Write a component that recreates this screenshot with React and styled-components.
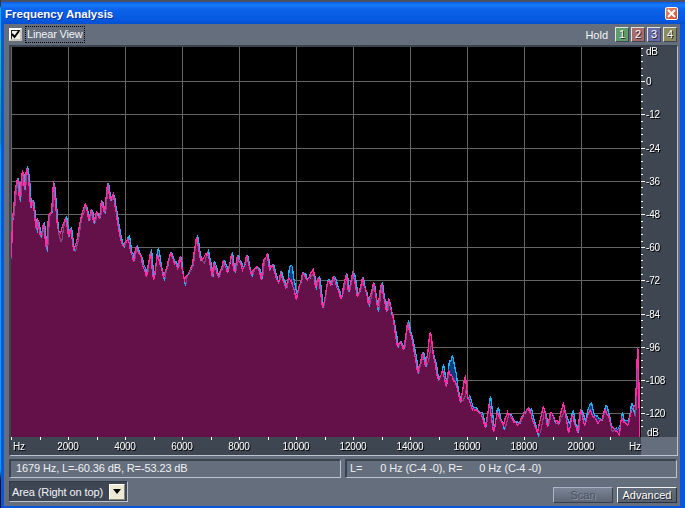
import React from "react";
import styled, { createGlobalStyle } from "styled-components";

const Global = createGlobalStyle`
  html, body { margin: 0; padding: 0; background: #0a4fd0; }
  body { width: 685px; height: 508px; overflow: hidden; }
  #root { width: 685px; height: 508px; }
`;

const UI = `"Liberation Sans", Arial, sans-serif`;

const Desktop = styled.div`
  width: 685px;
  height: 508px;
  display: flex;
  background: #0d0d0d;
`;
const Sliver = styled.div`
  width: 1px;
  flex: none;
  background: linear-gradient(to bottom, #30343c 0, #30343c 6px, #10a8e8 8px, #10a8e8 38px, #18c890 42px, #109880 140px, #0ea0e0 150px, #0ea0e0 470px, #101018 480px, #101018 508px);
`;
const Window = styled.div`
  flex: 1;
  display: flex;
  flex-direction: column;
  border-top: 2px solid #4a5060;
  background: #0a55dc;
  padding: 0 5px 2px 3px;
  min-width: 0;
`;
const TitleBar = styled.div`
  height: 22px;
  margin: 0 -5px 0 -3px;
  padding: 1px 7px 0 4px;
  box-sizing: border-box;
  display: flex;
  align-items: center;
  justify-content: space-between;
  background: linear-gradient(to bottom, #0a5fe8 0, #1878f8 3px, #0a62ea 8px, #0658e0 18px, #0450d0 22px);
`;
const Title = styled.div`
  font: bold 11.5px ${UI};
  color: #fff;
  text-shadow: 1px 1px 0 #0a2f90;
  white-space: nowrap;
`;
const Close = styled.div`
  width: 13px;
  height: 13px;
  box-sizing: border-box;
  border: 1px solid #fff;
  border-radius: 2px;
  background: linear-gradient(135deg, #ee8a68, #d84a28);
  display: flex;
  align-items: center;
  justify-content: center;
  svg { display: block; }
`;
const Content = styled.div`
  flex: 1;
  background: #646e7c;
  padding: 0 2px 0 5px;
  display: flex;
  flex-direction: column;
  min-height: 0;
`;
const Toolbar = styled.div`
  height: 21px;
  display: flex;
  align-items: center;
  justify-content: space-between;
  padding-right: 1px;
`;
const CheckWrap = styled.div`
  display: flex;
  align-items: center;
  gap: 4px;
`;
const CheckBox = styled.div`
  width: 13px;
  height: 13px;
  box-sizing: border-box;
  background: #f4f2e8;
  border: 2px solid;
  border-color: #fff #c8c4b4 #c8c4b4 #fff;
  box-shadow: inset 1px 1px 0 #222;
  display: flex;
  align-items: center;
  justify-content: center;
`;
const CheckLabel = styled.div`
  font: 11px ${UI};
  color: #f2f4f8;
  outline: 1px dotted #000;
  padding: 1px;
  height: 13px;
  line-height: 13px;
  letter-spacing: -0.15px;
  white-space: nowrap;
`;
const HoldGroup = styled.div`
  display: flex;
  align-items: center;
  gap: 2px;
`;
const HoldLabel = styled.div`
  font: 11px ${UI};
  color: #f2f4f8;
  margin-right: 5px;
`;
const HoldButton = styled.div`
  width: 14px;
  height: 15px;
  box-sizing: border-box;
  border: 1px solid;
  border-color: #dfe6d8 #3e4450 #3e4450 #dfe6d8;
  background: ${(p) => p.$bg};
  color: #fff;
  font: 11px/13px ${UI};
  text-align: center;
  text-shadow: 1px 1px 0 #222;
`;
const ChartFrame = styled.div`
  width: 669px;
  height: 411px;
  box-sizing: border-box;
  border-style: solid;
  border-width: 2px 1px 1px 2px;
  border-color: #3a424e #bcc4d0 #bcc4d0 #3a424e;
  svg { display: block; }
`;
const RulerText = styled.text`
  font: 10px ${UI};
  letter-spacing: -0.2px;
  fill: #fff;
`;
const RulerGroup = styled.g`
  filter: drop-shadow(1px 1px 0 #000);
`;
const StatusRow = styled.div`
  display: flex;
  gap: 4px;
  margin-top: 3px;
`;
const StatusPanel = styled.div`
  width: 332px;
  height: 19px;
  box-sizing: border-box;
  border-style: solid;
  border-width: 2px 1px 1px 2px;
  border-color: #3a424e #bcc4d0 #bcc4d0 #3a424e;
  padding-left: ${(p) => p.$pad}px;
  font: 11px/15px ${UI};
  letter-spacing: -0.12px;
  color: #eef0f4;
  white-space: pre;
`;
const Gap = styled.span`
  display: inline-block;
  width: ${(p) => p.$w}px;
`;
const BottomRow = styled.div`
  flex: 1;
  display: flex;
  align-items: flex-start;
  justify-content: space-between;
  margin-top: 3px;
`;
const Combo = styled.div`
  width: 119px;
  height: 21px;
  box-sizing: border-box;
  border-style: solid;
  border-width: 1px;
  border-color: #333a46 #bcc4d0 #bcc4d0 #333a46;
  background: #3e4654;
  display: flex;
  align-items: center;
  justify-content: space-between;
  padding: 0 1px 0 2px;
  font: 11px ${UI};
  letter-spacing: -0.1px;
  color: #f2f4f8;
  white-space: nowrap;
`;
const ComboButton = styled.div`
  width: 16px;
  height: 16px;
  background: #ece8d6;
  border: 1px solid;
  border-color: #fff #8a8878 #8a8878 #fff;
  box-sizing: border-box;
  display: flex;
  align-items: center;
  justify-content: center;
  margin-right: 1px;
`;
const Actions = styled.div`
  display: flex;
  gap: 4px;
  align-self: flex-end;
  margin-bottom: 3px;
  margin-right: 1px;
`;
const ActionButton = styled.div`
  width: 60px;
  height: 16px;
  box-sizing: border-box;
  border: 1px solid;
  border-color: ${(p) => (p.$off ? "#aab4c8 #39404c #39404c #aab4c8" : "#f0f2f6 #2a303a #2a303a #f0f2f6")};
  background: ${(p) => (p.$off ? "linear-gradient(#7a8494,#5c6674)" : "linear-gradient(#626c7a,#58626e)")};
  color: ${(p) => (p.$off ? "#4a525e" : "#fff")};
  font: 11px/14px ${UI};
  text-align: center;
  text-shadow: ${(p) => (p.$off ? "1px 1px 0 #8a94a4" : "1px 1px 0 #1c2028")};
`;

// pink (right) channel, traced peaks and valleys, page coordinates
const RP = [[11,257],[12,218],[15,188],[17,178],[19,200],[22,170],[24,190],[26,168],[28,177],[30,207],[32,200],[36,230],[37,218],[40,237],[43,223],[46,250],[48,215],[51,213],[53,181],[57,228],[60,233],[65,218],[68,237],[70,228],[73,250],[77,238],[80,220],[85,203],[88,220],[91,210],[93,222],[96,211],[99,218],[101,200],[104,213],[107,183],[110,200],[113,193],[117,223],[122,245],[128,240],[133,262],[135,248],[140,255],[146,277],[150,252],[153,280],[157,254],[163,278],[170,253],[177,268],[180,257],[184,280],[192,265],[196,237],[200,260],[207,252],[212,277],[213,262],[218,277],[223,260],[227,273],[231,254],[234,272],[237,255],[242,270],[246,255],[251,275],[257,267],[261,280],[263,260],[267,254],[269,269],[272,265],[278,283],[280,273],[285,288],[288,278],[291,280],[296,300],[302,273],[307,280],[313,268],[315,288],[318,277],[322,308],[327,282],[330,285],[333,277],[341,298],[346,273],[348,292],[352,273],[357,297],[362,277],[368,305],[373,282],[377,308],[381,283],[386,312],[388,298],[393,320],[397,347],[400,342],[403,350],[407,323],[411,337],[417,373],[422,352],[425,367],[430,332],[433,357],[438,380],[442,370],[446,387],[448,370],[455,382],[460,403],[465,375],[467,397],[472,410],[480,413],[485,427],[489,403],[493,432],[497,412],[503,425],[507,412],[517,425],[523,413],[528,408],[537,433],[543,407],[547,427],[550,413],[558,425],[563,402],[568,433],[572,415],[577,433],[580,410],[584,425],[590,410],[593,417],[598,423],[605,410],[612,427],[619,435],[621,417],[627,425],[633,407],[635,405],[636,380],[637,348],[638,350],[639,437]];

// local differences of the left channel from the right: [x, dy, half width]
const BUMPS = [[27,-3,2],[37,2,2],[60,8,3],[66,-2,2],[70,-3,2],[128,-4,3],[150,-5,3],[157,-9,3],[163,6,3],[170,-2,3],[184,7,3],[196,-3,2],[204,5,3],[231,-3,2],[250,3,3],[291,-17,3],[296,-5,2],[313,6,3],[327,-4,3],[346,3,2],[356,-2,3],[368,5,3],[377,6,3],[392,7,3],[407,-2,3],[430,14,3],[433,4,2],[443,-4,3],[452,-20,5],[465,18,3],[470,-3,3],[489,-6,3],[493,-5,3],[497,-6,2],[505,8,3],[532,-3,3],[540,10,3],[544,5,3],[555,6,3],[563,8,3],[570,-10,3],[586,-6,3],[590,-8,3],[598,-3,2],[606,-5,3],[612,5,3],[620,-10,2],[628,-3,3],[631,-10,2],[635,12,2],[637,22,1]];

function seeded(s) {
  return () => {
    s = (s * 1664525 + 1013904223) >>> 0;
    return s / 4294967296;
  };
}

// noise with a short correlation, so that it makes narrow peaks
function wobble(rnd, amp) {
  const raw = Array.from({ length: 700 }, () => (rnd() - 0.5) * 2);
  return (x) => amp * (raw[x] * 0.6 + raw[x + 1] * 0.4);
}

function buildSpectrum() {
  const rnd = seeded(4711);
  const nr = wobble(rnd, 3.2);
  const nl = wobble(rnd, 2.2);
  const R = {};
  const L = {};
  const isKey = new Set(RP.map((p) => p[0]));
  for (let i = 0; i < RP.length - 1; i++) {
    const [x0, y0] = RP[i];
    const [x1, y1] = RP[i + 1];
    for (let x = x0; x < x1; x++) {
      const t = (x - x0) / (x1 - x0);
      const n = isKey.has(x) || x > 632 ? 0 : nr(x);
      R[x] = Math.min(436, Math.round(y0 + (y1 - y0) * t + n));
    }
  }
  R[639] = 437;
  for (let x = 11; x <= 639; x++) {
    // the left channel lags the right by a pixel, which shows it on falling slopes
    const base = x > 12 && x <= 632 ? R[x - 1] : R[x];
    const bias = x < 125 ? 1 : -0.6;
    let d = x > 632 ? 0 : nl(x) + bias;
    for (const [bx, dy, w] of BUMPS) {
      const k = 1 - Math.abs(x - bx) / (w + 1);
      if (k > 0) d += dy * k;
    }
    L[x] = Math.min(437, Math.round(base + d));
  }
  return { R, L };
}

const { R, L } = buildSpectrum();
const XS = Array.from({ length: 629 }, (_, i) => 11 + i);

const area = (f) =>
  `M11 437 ` + XS.map((x) => `L${x + 0.5} ${f(x)}`).join(" ") + ` L640 437 Z`;
const line = (A) => `M` + XS.map((x) => `${x + 0.5} ${A[x]}`).join(" L");
const segments = (test) =>
  XS.slice(0, -1)
    .filter(test)
    .map((x) => `M${x + 0.5} ${L[x]} L${x + 1.5} ${L[x + 1]}`)
    .join(" ");

const GRID_X = Array.from({ length: 11 }, (_, i) => 11.5 + 57 * i);
const GRID_Y = [81, 114, 148, 181, 214, 247, 280, 314, 347, 380, 413];
const DB = ["0", "-12", "-24", "-36", "-48", "-60", "-72", "-84", "-96", "-108", "-120"];
const FREQ = [2000, 4000, 6000, 8000, 10000, 12000, 14000, 16000, 18000, 20000];
const MINOR = Array.from({ length: 22 }, (_, i) => 11.5 + 28.5 * i);
const DOTS = Array.from({ length: 58 }, (_, i) => 48 + i * 6.64);

const Spectrum = () => (
  <svg width="666" height="408" viewBox="11 47 666 408" aria-label="Spectrum">
    <rect x="11" y="47" width="666" height="408" fill="#646e7c" />
    <rect x="641" y="47" width="36" height="390" fill="#3e4652" />
    <rect x="11" y="437" width="630" height="18" fill="#3e4652" />
    <rect x="11" y="47" width="630" height="390" fill="#000" />
    <g stroke="#646464" strokeWidth="1" shapeRendering="crispEdges">
      {GRID_X.map((x) => (
        <line key={x} x1={x} x2={x} y1="47" y2="437" />
      ))}
      {GRID_Y.map((y) => (
        <line key={y} x1="11" x2="640" y1={y + 0.5} y2={y + 0.5} />
      ))}
    </g>
    <g shapeRendering="crispEdges">
      <path d={area((x) => L[x])} fill="#0b3c80" />
      <path d={area((x) => R[x])} fill="#7c0838" />
      <path d={area((x) => Math.max(L[x], R[x]))} fill="#64114a" />
      <path d={segments((x) => L[x] > R[x] + 1)} stroke="#7a4a88" strokeWidth="1.2" fill="none" />
      <path d={segments((x) => L[x] <= R[x] + 1)} stroke="#22aef0" strokeWidth="1.3" fill="none" />
      <path d={line(R)} stroke="#ff2ca4" strokeWidth="1.3" fill="none" />
    </g>
    <g fill="#fff" shapeRendering="crispEdges">
      {DOTS.map((y) => (
        <rect key={y} x="641" y={Math.round(y)} width="2" height="1" />
      ))}
      {GRID_Y.map((y) => (
        <rect key={y} x="641" y={y} width="4" height="1" />
      ))}
      {MINOR.map((x) => (
        <rect key={x} x={Math.floor(x)} y="437" width="1" height="3" />
      ))}
    </g>
    <RulerGroup>
      <RulerText x="646" y="55">dB</RulerText>
      {DB.map((d, i) => (
        <RulerText key={d} x="646" y={GRID_Y[i] + 4}>{d}</RulerText>
      ))}
      <RulerText x="647" y="436">dB</RulerText>
      <RulerText x="13" y="450">Hz</RulerText>
      {FREQ.map((f, i) => (
        <RulerText key={f} x={68 + 57 * i} y="450" textAnchor="middle">{f}</RulerText>
      ))}
      <RulerText x="629" y="450">Hz</RulerText>
    </RulerGroup>
  </svg>
);

export default function App() {
  return (
    <Desktop>
      <Global />
      <Sliver />
      <Window>
        <TitleBar>
          <Title>Frequency Analysis</Title>
          <Close>
            <svg width="9" height="9" viewBox="0 0 9 9">
              <path d="M1 1 L8 8 M8 1 L1 8" stroke="#fff" strokeWidth="2" />
            </svg>
          </Close>
        </TitleBar>
        <Content>
          <Toolbar>
            <CheckWrap>
              <CheckBox>
                <svg width="9" height="9" viewBox="0 0 9 9">
                  <path d="M1 4 L3.5 7 L8 1" stroke="#000" strokeWidth="2" fill="none" />
                </svg>
              </CheckBox>
              <CheckLabel>Linear View</CheckLabel>
            </CheckWrap>
            <HoldGroup>
              <HoldLabel>Hold</HoldLabel>
              <HoldButton $bg="#5f9e6a">1</HoldButton>
              <HoldButton $bg="#a86a6c">2</HoldButton>
              <HoldButton $bg="#6a6aa8">3</HoldButton>
              <HoldButton $bg="#8c8c60">4</HoldButton>
            </HoldGroup>
          </Toolbar>
          <ChartFrame>
            <Spectrum />
          </ChartFrame>
          <StatusRow>
            <StatusPanel $pad={5}>1679 Hz, L=-60.36 dB, R=-53.23 dB</StatusPanel>
            <StatusPanel $pad={3}>
              L=<Gap $w={18} />0 Hz (C-4 -0), R=<Gap $w={17} />0 Hz (C-4 -0)
            </StatusPanel>
          </StatusRow>
          <BottomRow>
            <Combo>
              Area (Right on top)
              <ComboButton>
                <svg width="8" height="5" viewBox="0 0 8 5">
                  <path d="M0 0 H8 L4 5 Z" fill="#000" />
                </svg>
              </ComboButton>
            </Combo>
            <Actions>
              <ActionButton $off>Scan</ActionButton>
              <ActionButton>Advanced</ActionButton>
            </Actions>
          </BottomRow>
        </Content>
      </Window>
    </Desktop>
  );
}
